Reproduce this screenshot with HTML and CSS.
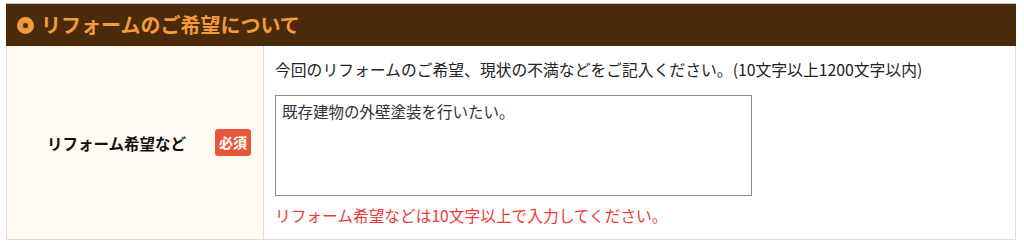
FILE: index.html
```html
<!DOCTYPE html>
<html lang="ja">
<head>
    <meta charset="UTF-8">
    <meta name="viewport" content="width=device-width, initial-scale=1.0">
    <title>リフォームのご希望について</title>
    <link rel="stylesheet" href="styles.css">
</head>
<body>
    <div class="form-section">
        <h2 class="section-title">
            <span class="title-icon"></span>
            リフォームのご希望について
        </h2>

        <div class="form-row">
            <div class="form-label">
                <span class="label-text">リフォーム希望など</span>
                <span class="required">必須</span>
            </div>
            <div class="form-field">
                <p class="field-note">今回のリフォームのご希望、現状の不満などをご記入ください。(10文字以上1200文字以内)</p>
                <textarea class="field-textarea" name="reform">既存建物の外壁塗装を行いたい。</textarea>
                <p class="field-error">リフォーム希望などは10文字以上で入力してください。</p>
            </div>
        </div>
    </div>
</body>
</html>
```

FILE: styles.css
```css
body {
    margin: 0;
    background: #fff;
    font-family: "Noto Sans CJK JP", "Noto Sans", sans-serif;
    color: #222;
}
.form-section {
    width: 1010px;
    margin: 3px 0 0 6px;
    border-top: 1px solid #c9c0b6;
}
.section-title {
    display: flex;
    align-items: center;
    gap: 7px;
    height: 42px;
    margin: 0;
    padding-left: 11px;
    background: #4a2a0a;
    color: #f29b3a;
    font-size: 20px;
    font-weight: bold;
    line-height: 1;
}
.title-icon {
    box-sizing: border-box;
    width: 17px;
    height: 17px;
    border-radius: 50%;
    border: 5px solid #f29b3a;
    background: #4a2a0a;
    box-shadow: inset 0 0 0 1px #f29b3a;
}
.form-row {
    display: grid;
    grid-template-columns: 257px 1fr;
    border: 1px solid #ddd;
    border-top: none;
    height: 193px;
}
.form-label {
    display: flex;
    align-items: center;
    padding: 0 12px 0 40px;
    background: #fffaf2;
    border-right: 1px solid #ddd;
}
.label-text {
    font-size: 15.5px;
    font-weight: bold;
    color: #111;
}
.required {
    margin-left: auto;
    padding: 4px 4px;
    border-radius: 3px;
    background: #e8573a;
    color: #fff;
    font-size: 14px;
    font-weight: bold;
    line-height: 19px;
}
.form-field {
    padding: 13px 11px 0 11px;
}
.field-note {
    margin: 0;
    font-size: 15.8px;
    line-height: 22px;
    color: #222;
}
.field-textarea {
    display: block;
    box-sizing: border-box;
    width: 477px;
    height: 101px;
    margin-top: 14px;
    padding: 4px 6px;
    border: 1px solid #8a8a8a;
    font-family: inherit;
    font-size: 15.5px;
    line-height: 22px;
    color: #333;
    resize: none;
}
.field-error {
    margin: 9px 0 0;
    font-size: 15.7px;
    line-height: 22px;
    color: #ec3a3a;
}
```
